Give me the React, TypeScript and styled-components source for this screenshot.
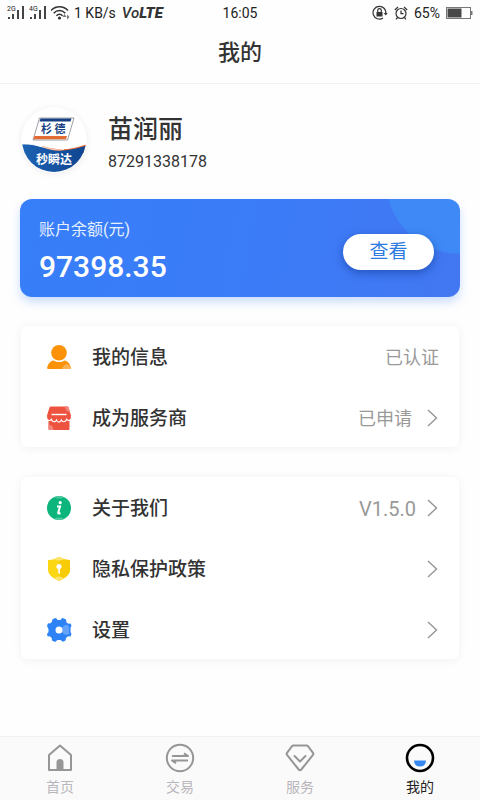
import React from "react";
import styled, { createGlobalStyle, css } from "styled-components";

const GlobalStyle = createGlobalStyle`
  * { box-sizing: border-box; }
  body {
    margin: 0;
    background: #fefefe;
    color: #333;
    font-family: Roboto, "Noto Sans CJK SC", sans-serif;
  }
  button { font: inherit; color: inherit; }
`;

const Page = styled.div`
  display: flex;
  flex-direction: column;
  min-height: 100vh;
`;

const StatusBar = styled.div`
  display: grid;
  grid-template-columns: 1fr auto 1fr;
  align-items: center;
  height: 26px;
  padding: 0 7px;
  font-size: 14px;
  line-height: 20px;
  color: #222;
`;

const StatusGroup = styled.div<{ $end?: boolean }>`
  display: flex;
  align-items: center;
  gap: ${(p) => (p.$end ? 6 : 4)}px;
  justify-content: ${(p) => (p.$end ? "flex-end" : "flex-start")};
  white-space: nowrap;
`;

const Volte = styled.span`
  font-size: 15px;
  font-style: italic;
  font-weight: 500;
  padding-left: 2px;
  color: #333;
  b { font-weight: 900; }
`;

const Header = styled.header`
  display: flex;
  align-items: center;
  justify-content: center;
  height: 58px;
  padding-bottom: 4px;
  border-bottom: 1px solid #f1f1f1;
`;

const Title = styled.h1`
  margin: 0;
  font-size: 22px;
  line-height: 32px;
  font-weight: 500;
`;

const Main = styled.main`
  display: flex;
  flex-direction: column;
  padding: 23px 20px 40px;
`;

const Profile = styled.section`
  display: flex;
  align-items: center;
  gap: 21px;
  height: 66px;
`;

const Avatar = styled.div`
  width: 66px;
  height: 66px;
  padding: 1px;
  border-radius: 50%;
  box-shadow: 0 1px 6px rgba(0, 0, 0, 0.08);
  margin-left: 1px;
  svg { display: block; }
`;

const ProfileText = styled.div`
  display: flex;
  flex-direction: column;
  gap: 4px;
  padding-top: 4px;
`;

const Name = styled.h2`
  margin: 0;
  font-size: 25px;
  line-height: 36px;
  font-weight: 500;
`;

const Phone = styled.div`
  font-size: 16px;
  line-height: 20px;
`;

const Balance = styled.section`
  display: flex;
  align-items: center;
  justify-content: space-between;
  height: 98px;
  margin-top: 26px;
  padding: 8px 26px 0 19px;
  border-radius: 12px;
  background:
    radial-gradient(circle 73px at calc(100% - 1px) -18px, #3e89f6 72px, transparent 73px),
    linear-gradient(100deg, #377ef9, #3b7cf8 50%, #4277f1);
  box-shadow: 0 5px 10px rgba(55, 126, 249, 0.26);
  color: #fff;
`;

const BalanceLabel = styled.div`
  font-size: 16px;
  line-height: 24px;
  color: #e6f0ff;
`;

const Amount = styled.div`
  margin-top: 6px;
  font-size: 30px;
  line-height: 38px;
  font-weight: 500;
`;

const ViewButton = styled.button`
  width: 91px;
  height: 36px;
  padding: 0;
  border: 0;
  border-radius: 18px;
  background: #fff;
  color: #2d7be0;
  font-size: 19px;
  line-height: 28px;
  box-shadow: 0 3px 9px rgba(10, 50, 140, 0.5);
`;

const Card = styled.section<{ $first?: boolean }>`
  display: flex;
  flex-direction: column;
  gap: 1px;
  margin: ${(p) => (p.$first ? 29 : 30)}px 1px 0;
  border-radius: 6px;
  background: #fff;
  box-shadow: 0 1px 10px rgba(0, 0, 0, 0.06);
`;

const Row = styled.button`
  display: flex;
  align-items: center;
  width: 100%;
  height: 60px;
  padding: 2px 20px 0 25px;
  border: 0;
  background: transparent;
  text-align: left;
  svg { flex: none; }
`;

const RowLabel = styled.span`
  flex: 1;
  margin-left: 20px;
  padding-top: 2px;
  font-size: 19px;
  line-height: 28px;
  font-weight: 500;
`;

const RowValue = styled.span<{ $version?: boolean }>`
  padding-top: 2px;
  color: #999;
  font-size: ${(p) => (p.$version ? 20 : 18)}px;
  line-height: 28px;
  margin-right: ${(p) => (p.$version ? -4 : 0)}px;
`;

const Chevron = styled.svg`
  margin-left: 14px;
`;

const TabBar = styled.nav`
  display: grid;
  grid-template-columns: repeat(4, 1fr);
  height: 64px;
  margin-top: auto;
  border-top: 1px solid #f1f1f1;
  background: #fafafa;
`;

const Tab = styled.a<{ $active?: boolean }>`
  display: flex;
  flex-direction: column;
  align-items: center;
  gap: 4px;
  padding-top: 6px;
  font-size: 14px;
  line-height: 20px;
  text-decoration: none;
  color: #b8b6bc;
  ${(p) => p.$active && css`color: #222;`}
`;

const Signal = ({ label }: { label: string }) => (
  <svg width="18" height="16" viewBox="0 0 18 16" fill="#444">
    <text x="0" y="6" fontSize="7" fontFamily="Roboto" fill="#222">{label}</text>
    <path d="M1 12h2v2H1zM5 9h2v5H5zM10 5h2v9h-2zM15 1h2v13h-2z" />
  </svg>
);

const Wifi = () => (
  <svg width="19" height="16" viewBox="0 0 19 16" fill="none" stroke="#333" strokeWidth="1.5">
    <path d="M0 5.500c4.500-5 12.500-5 17 0M2.700 8.200c3.200-3.500 8.400-3.500 11.600 0M5.400 10.800c2-2.200 4.200-2.200 6.200 0" />
    <circle cx="8.500" cy="13" r="1.600" fill="#333" stroke="none" />
    <path d="m13.500 9-2 3h4zM16 9.500v5l2.500-2.500z" fill="#777" stroke="none" />
  </svg>
);

const LockIcon = () => (
  <svg width="16" height="16" viewBox="0 0 16 16" fill="none" stroke="#333" strokeWidth="1.200">
    <path d="M13.700 9A6.400 6.400 0 1 0 11 13M13.700 9V6" />
    <path d="m11.700 8 2 2.500 2-2.500z" fill="#333" stroke="none" />
    <path d="M4.500 7h6v4.500h-6z" fill="#333" stroke="none" />
    <path d="M5.700 7V5.500a1.800 1.800 0 0 1 3.600 0V7" />
  </svg>
);

const AlarmIcon = () => (
  <svg width="14" height="14" viewBox="0 0 14 14" fill="none" stroke="#333" strokeWidth="1.200">
    <circle cx="7" cy="7.500" r="5" />
    <path d="M7 4.500v3.200h2.500M.8 4 4 1M13.200 4 10 1M3.500 11.500 2 13.300M10.500 11.500l1.500 1.800" />
  </svg>
);

const Battery = () => (
  <svg width="27" height="12" viewBox="0 0 27 12">
    <rect x=".5" y=".5" width="24" height="11" fill="#fff" stroke="#777" />
    <path d="M1.500 1.500h14v9h-14z" fill="#484848" />
    <path d="M25 4h1.500v4H25z" fill="#777" />
  </svg>
);

const Logo = () => (
  <svg width="64" height="64" viewBox="0 0 64 64" role="img" aria-label="杉德 秒瞬达">
    <defs>
      <clipPath id="disc"><circle cx="32" cy="32" r="32" /></clipPath>
      <linearGradient id="sea" x1="0" x2="1">
        <stop offset="0" stopColor="#1c62b2" />
        <stop offset="1" stopColor="#104590" />
      </linearGradient>
    </defs>
    <g clipPath="url(#disc)">
      <path d="M0 0h64v64H0z" fill="#fff" />
      <path d="M20 38c17 5 28 4 44-1.500v9H24z" fill="#e56b35" />
      <path d="M0 36c17-1 26 8 40 6.500 10-.8 17-2.500 24-5v27H0z" fill="url(#sea)" />
      <path d="M0 36c17-1 27 8 42 5.500" fill="none" stroke="#fff" strokeWidth=".8" />
    </g>
    <path d="M17.500 10H52l-6.500 22H11z" fill="#fff" stroke="#73777d" strokeWidth=".7" />
    <path d="M18.500 10.500h31l-1 3H17.500z" fill="#173f83" />
    <path d="M12.500 28h32.500l-1 3.200H11.500z" fill="#e56b35" />
    <text x="19" y="25" fontSize="11" fontWeight="700" fill="#173f83" fontFamily="Noto Sans CJK SC">杉</text>
    <text x="32.500" y="25" fontSize="11" fontWeight="700" fill="#173f83" fontFamily="Noto Sans CJK SC">德</text>
    <text x="32" y="56" textAnchor="middle" fontSize="12" fontWeight="700" fill="#fff" fontFamily="Noto Sans CJK SC">秒瞬达</text>
  </svg>
);

const PersonIcon = () => (
  <svg width="26" height="26" viewBox="0 0 26 26" fill="#fb9207">
    <circle cx="13" cy="8.800" r="7.800" />
    <path d="M2 25c-.8 0-1-.5-.8-1.200.7-4.300 3.300-6.800 6.300-7.300 3.500 2 7.500 2 11 0 3 .5 5.700 3 6.300 7.300.1.700-.1 1.200-.8 1.200z" />
    <path d="M16.500 25c0-2.800 1.600-4.800 4-4.800 2.200 0 3.500 1.300 4.300 3.600.1.700-.1 1.200-.8 1.200z" fill="#fbb251" />
  </svg>
);

const ShopIcon = () => (
  <svg width="26" height="26" viewBox="0 0 26 26">
    <path d="M2.500 14h21v9.500c0 1-.5 1.500-1.500 1.500H4c-1 0-1.500-.5-1.500-1.500z" fill="#ee5340" />
    <path d="M5 1h16c1.200 0 1.800.5 2.200 1.600L25.500 10v2c0 3.500-3.200 4.500-4.800 2.300-1.200 3-4.200 3.200-5.400.8-1 2.600-3.700 2.600-4.700 0-1.200 2.500-4.200 2.200-5.300-.8C3.700 16.500.500 15.500.5 12v-2l2.300-7.400C3.200 1.500 3.800 1 5 1z" fill="#ee5340" stroke="#fff" strokeWidth="1.200" />
    <path d="M19 1.500h2c1 0 1.500.5 1.800 1.300L24 7C21 7 19 4.500 19 1.500z" fill="#f38479" />
    <path d="M2.500 20c3.500 0 5 2 5 5H4c-1 0-1.500-.5-1.500-1.500z" fill="#f38479" />
    <path d="M5.500 9.500h15" stroke="#fff" strokeWidth="1.400" />
  </svg>
);

const InfoIcon = () => (
  <svg width="26" height="26" viewBox="0 0 26 26">
    <circle cx="13" cy="13" r="12" fill="#0cb57b" />
    <path d="M8 2.200q5-2.500 10 0-5 2.500-10 0M8 23.800q5-2.500 10 0-5 2.500-10 0" fill="#50caa0" />
    <circle cx="14.200" cy="7.700" r="1.600" fill="#fff" />
    <path d="M11 11.500h3l-1.800 6.300q-.3 1.500 2.300.2" fill="none" stroke="#fff" strokeWidth="2" />
  </svg>
);

const ShieldIcon = () => (
  <svg width="26" height="26" viewBox="0 0 26 26">
    <path d="M13 1c3 2 6.500 2.800 11 3v9.500c0 5.500-5 8.500-11 11.500-6-3-11-6-11-11.500V4c4.500-.2 8-1 11-3z" fill="#fbd713" />
    <path d="M13 1c3 2 6.500 2.800 11 3v9.500c0 5.500-5 8.500-11 11.500z" fill="#f8cc05" />
    <path d="M8 3q5-4 10 0-5 3-10 0M8 22.500q5-4 10 0L13 25z" fill="#fde36b" />
    <circle cx="13" cy="10.500" r="2.600" fill="#fff" />
    <path d="M12.200 12h1.800v6l-1.800-1z" fill="#fff" />
  </svg>
);

const GearIcon = () => (
  <svg width="26" height="26" viewBox="0 0 26 26">
    <path d="M8 1.500 10 1l1.500 2h3L16 1l2 .5 2 1 .5 3 2 1.200 2-.2 1 2-1 2.500v4l1 2-1 2.500-2.500-.2-2 1.700-.5 2.500-2.500 1.200-2.500-1.700h-3L9 25l-3-1.500-.3-2.500-2-1.700-2 .2L1 17l1.500-2v-3L1 9l1-2.700 2 .2 2-1.800.3-2.200z" fill="#2d82f6" />
    <path d="M20 8c1.500 0 2.500.5 3 1.500v5.500l.5 2c-4 2-7.500-.2-7.500-4 0-2.800 1.500-5 4-5z" fill="#64a4fb" />
    <circle cx="13" cy="13" r="3.500" fill="#fff" />
  </svg>
);

const Arrow = () => (
  <Chevron width="13" height="18" viewBox="0 0 13 18" fill="none" stroke="#999" strokeWidth="1.500">
    <path d="m2 1 8.500 8L2 17" />
  </Chevron>
);

const HomeIcon = () => (
  <svg width="30" height="30" viewBox="0 0 30 30" fill="none" stroke="#969696" strokeWidth="2" strokeLinejoin="round">
    <path d="M4 12 15 2.500 26 12v15H4z" />
    <path d="M11.500 27v-8c0-4 7-4 7 0v8z" fill="#969696" stroke="none" />
  </svg>
);

const TradeIcon = () => (
  <svg width="30" height="30" viewBox="0 0 30 30" fill="none" stroke="#969696" strokeWidth="2">
    <circle cx="15" cy="15" r="13.200" />
    <path d="M7 13h16l-4-2.700M23 17.500H7l4 2.700" strokeLinejoin="round" />
  </svg>
);

const ServiceIcon = () => (
  <svg width="30" height="30" viewBox="0 0 30 30" fill="none" stroke="#969696" strokeWidth="2" strokeLinejoin="round" strokeLinecap="round">
    <path d="M8.500 2.500h13q1 0 1.700.8l4.800 6.500q.8 1.300-.2 2.400L16.300 26.500q-1.300 1.500-2.600 0L2.200 12.200q-1-1.100-.2-2.400l4.800-6.500q.7-.8 1.700-.8z" />
    <path d="m9.500 13 5.500 5.500 5.500-5.500" />
  </svg>
);

const MineIcon = () => (
  <svg width="30" height="30" viewBox="0 0 30 30">
    <circle cx="15" cy="15" r="13" fill="none" stroke="#000" strokeWidth="2.600" />
    <path d="M9 17.500h12q-.5 6-6 6t-6-6z" fill="#3788ef" />
  </svg>
);

type Item = {
  icon: React.ReactNode;
  label: string;
  value?: string;
  version?: boolean;
  arrow?: boolean;
};

const account: Item[] = [
  { icon: <PersonIcon />, label: "我的信息", value: "已认证" },
  { icon: <ShopIcon />, label: "成为服务商", value: "已申请", arrow: true },
];

const general: Item[] = [
  { icon: <InfoIcon />, label: "关于我们", value: "V1.5.0", version: true, arrow: true },
  { icon: <ShieldIcon />, label: "隐私保护政策", arrow: true },
  { icon: <GearIcon />, label: "设置", arrow: true },
];

const tabs = [
  { icon: <HomeIcon />, label: "首页" },
  { icon: <TradeIcon />, label: "交易" },
  { icon: <ServiceIcon />, label: "服务" },
  { icon: <MineIcon />, label: "我的", active: true },
];

const Menu = ({ items, first }: { items: Item[]; first?: boolean }) => (
  <Card $first={first}>
    {items.map((item) => (
      <Row key={item.label} type="button">
        {item.icon}
        <RowLabel>{item.label}</RowLabel>
        {item.value && <RowValue $version={item.version}>{item.value}</RowValue>}
        {item.arrow && <Arrow />}
      </Row>
    ))}
  </Card>
);

export default function App() {
  return (
    <Page>
      <GlobalStyle />
      <StatusBar>
        <StatusGroup>
          <Signal label="2G" />
          <Signal label="4G" />
          <Wifi />
          <span>1 KB/s</span>
          <Volte>Vo<b>LTE</b></Volte>
        </StatusGroup>
        <span>16:05</span>
        <StatusGroup $end>
          <LockIcon />
          <AlarmIcon />
          <span>65%</span>
          <Battery />
        </StatusGroup>
      </StatusBar>
      <Header>
        <Title>我的</Title>
      </Header>
      <Main>
        <Profile>
          <Avatar><Logo /></Avatar>
          <ProfileText>
            <Name>苗润丽</Name>
            <Phone>87291338178</Phone>
          </ProfileText>
        </Profile>
        <Balance>
          <div>
            <BalanceLabel>账户余额(元)</BalanceLabel>
            <Amount>97398.35</Amount>
          </div>
          <ViewButton type="button">查看</ViewButton>
        </Balance>
        <Menu items={account} first />
        <Menu items={general} />
      </Main>
      <TabBar>
        {tabs.map((tab) => (
          <Tab key={tab.label} href="#" $active={tab.active} aria-current={tab.active ? "page" : undefined}>
            {tab.icon}
            {tab.label}
          </Tab>
        ))}
      </TabBar>
    </Page>
  );
}
